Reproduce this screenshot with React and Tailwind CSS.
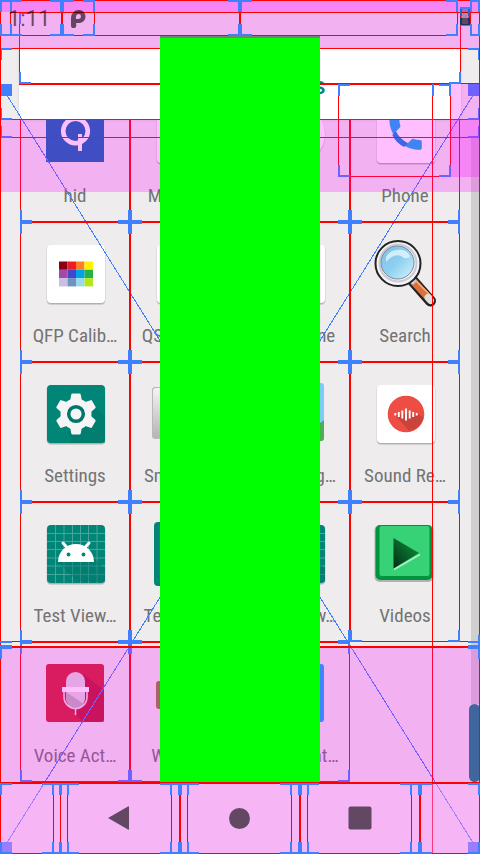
import React from "react";

const FONT = "font-['Roboto_Condensed','Liberation_Sans_Narrow',Roboto,sans-serif]";

const RED = "#ff0000";
const BLUE = "#4080ff";

function Plate({ fill = "#ffffff", children }) {
  return (
    <>
      <rect x="-0.5" y="0.5" width="59" height="59.5" rx="4.5" fill="#00000020" />
      <rect x="0" y="1" width="58" height="58" rx="4" fill="#00000025" />
      <rect x="0" y="0" width="58" height="58" rx="4" fill={fill} />
      {children}
    </>
  );
}

const icons = {
  hid: (
    <>
      <rect x="-1" y="-1" width="58" height="58" fill="#0068b0" />
      <circle cx="28.5" cy="26" r="12.3" fill="none" stroke="#fff" strokeWidth="4.6" />
      <path d="M33 29V46" stroke="#fff" strokeWidth="4" />
    </>
  ),
  card: <Plate />,
  round: (
    <>
      <circle cx="29" cy="30" r="29.5" fill="#00000025" />
      <circle cx="29" cy="29" r="29" fill="#fff" />
    </>
  ),
  phone: (
    <Plate>
      <g transform="translate(7 7) scale(1.8)">
        <path
          fill="#00b0f0"
          d="M6.62 10.79c1.44 2.83 3.76 5.14 6.59 6.59l2.2-2.2c.27-.27.67-.36 1.02-.24 1.12.37 2.33.57 3.57.57.55 0 1 .45 1 1V20c0 .55-.45 1-1 1C10.61 21 3 13.39 3 4c0-.55.45-1 1-1h3.5c.55 0 1 .45 1 1 0 1.25.2 2.45.57 3.57.11.35.03.74-.25 1.02z"
        />
        <path fill="#0088d8" d="M6.62 10.79c1.44 2.83 3.76 5.14 6.59 6.59l-2.1 2.1C8.3 18 6 15.8 4.6 12.8z" />
      </g>
    </Plate>
  ),
  qfp: (
    <Plate>
      {[
        ["#880015", "#ed1c24", "#ff7f27", "#fff200"],
        ["#a349a4", "#3f48cc", "#00a2e8", "#22b14c"],
        ["#c8bfe7", "#7092be", "#99d9ea", "#b5e61d"],
      ].map((row, r) =>
        row.map((c, i) => (
          <rect key={c} x={12 + i * 8.5} y={16.5 + r * 8.3} width="8.5" height="8.3" fill={c} />
        ))
      )}
    </Plate>
  ),
  search: (
    <>
      <path d="M35 35L53.5 56" stroke="#222" strokeWidth="11" strokeLinecap="round" />
      <path d="M36 36L53 54.500" stroke="#d9703d" strokeWidth="7.5" />
      <path d="M39 36L55 52" stroke="#f5b18a" strokeWidth="1.5" />
      <path d="M51 52.500L53.500 55.500" stroke="#ddd" strokeWidth="7" strokeLinecap="round" />
      <path d="M34 34L38 38" stroke="#ccc" strokeWidth="6" />
      <circle cx="21" cy="18.500" r="22.500" fill="#f4f4f8" stroke="#222" strokeWidth="2" />
      <circle cx="21" cy="18" r="18.500" fill="none" stroke="#c9cad6" strokeWidth="2" />
      <circle cx="20.500" cy="17.500" r="16.500" fill="url(#glass)" stroke="#7d8790" strokeWidth="1" />
      <path d="M9 12Q14 3 26 5Q32 7 33 12Q28 15 24 11Q17 8 9 17Z" fill="#f1fcff" opacity="0.7" />
    </>
  ),
  settings: (
    <Plate fill="#018577">
      <path d="M45 19L58 32V58H24L20 46L40 40Z" fill="#017a6d" opacity="0.6" />
      <g fill="#f5f5f5">
        <circle cx="29" cy="29" r="15.5" />
        {[0, 60, 120, 180, 240, 300].map((a) => (
          <path
            key={a}
            transform={`rotate(${a} 29 29)`}
            d="M25.5 8.500h7q1 0 1.200 1l1.300 7h-12l1.300-7q.2-1 1.200-1Z"
          />
        ))}
      </g>
      <circle cx="29" cy="29" r="7.3" fill="#f5f5f5" stroke="#00776b" strokeWidth="3.5" />
    </Plate>
  ),
  battery: (
    <>
      <rect x="-5" y="2" width="68" height="52" rx="3" fill="#b9b9b9" />
      <rect x="-4" y="3" width="66" height="49" rx="3" fill="url(#steel)" />
    </>
  ),
  landscape: (
    <>
      <rect x="-1" y="-2" width="58" height="58" rx="3" fill="#7ecbf5" />
      <path d="M30 56L57 35V53Q57 56 54 56Z" fill="#4caf50" />
    </>
  ),
  sound: (
    <Plate>
      <circle cx="29" cy="29" r="18.3" fill="#ee4d43" />
      <path d="M18 30L32 46Q43 44 46.500 33L40 28Z" fill="#a83c35" opacity="0.5" />
      <path
        d="M18.300 28v2.500M21.800 27v5M25.300 25.500v8M29 23.500v12M32.700 25.500v8M36.200 27v5M39.700 28v2.500"
        stroke="#fff"
        strokeWidth="1.9"
      />
    </Plate>
  ),
  android: (
    <Plate fill="#018577">
      <path
        d="M8.500 0V58M17 0V58M25.500 0V58M33.500 0V58M41.500 0V58M50 0V58M0 8.500H58M0 16.500H58M0 24.500H58M0 33H58M0 41H58M0 49.500H58"
        stroke="#4fa99f"
        strokeWidth="0.9"
      />
      <path d="M11 37L31 57H58V44L46 32Z" fill="#01766a" opacity="0.45" />
      <path d="M16 18L20.500 23M42 18L37.500 23" stroke="#fff" strokeWidth="3" strokeLinecap="round" />
      <path d="M11 37a18 18 0 0 1 36 0Z" fill="#fff" />
      <circle cx="21.500" cy="29.500" r="1.9" fill="#018577" />
      <circle cx="36.500" cy="29.500" r="1.9" fill="#018577" />
    </Plate>
  ),
  tall: <rect x="-3" y="-3" width="64" height="64" rx="4" fill="#018577" />,
  videos: (
    <>
      <rect x="-2.500" y="0" width="59" height="57" rx="5" fill="#00000040" />
      <rect x="-1.500" y="0" width="57" height="55" rx="5" fill="#00953c" />
      <rect x="2.500" y="1" width="50" height="50" rx="2" fill="#36d275" />
      <path d="M17 44.500L43 29.500" stroke="#a9f0c8" strokeWidth="1.8" />
      <path d="M16.500 13V43.500L42 28Z" fill="url(#play)" />
    </>
  ),
  voice: (
    <>
      <rect x="-1" y="-1" width="58" height="58" rx="3" fill="#cb262a" />
      <path d="M36 9L57 25V57H36L20 40L36 36Z" fill="#a81027" opacity="0.55" />
      <rect x="19" y="7" width="19" height="36" rx="9.5" fill="#dedede" />
      <path d="M19 27L37 39Q34 44 28 43Q20 41 19 33Z" fill="#b9b9b9" />
      <rect x="15" y="22" width="27" height="5" fill="#fff" />
      <path d="M17 27v5a11.500 11.500 0 0 0 23 0V27M28.500 43V50" fill="none" stroke="#f5dfe4" strokeWidth="1.6" />
    </>
  ),
  wallet: <rect x="-1" y="16" width="60" height="28" rx="3" fill="#8b8536" />,
  blue: <rect x="-1" y="-1" width="58" height="58" rx="3" fill="#00b0ff" />,
};

const apps = [
  ["hid", "hid"],
  ["card", "Messagi…"],
  ["round", "Music"],
  ["phone", "Phone"],
  ["qfp", "QFP Calib…"],
  ["card", "QSensor T…"],
  ["card", "QTI Engine"],
  ["search", "Search"],
  ["settings", "Settings"],
  ["battery", "Snapdrag…"],
  ["landscape", "Snapdrag…"],
  ["sound", "Sound Re…"],
  ["android", "Test View…"],
  ["tall", "Test View…"],
  ["android", "Test View…"],
  ["videos", "Videos"],
  ["voice", "Voice Act…"],
  ["wallet", "WebVie…"],
  ["blue", "Widget Int…"],
];

function AppTile({ icon, label }) {
  return (
    <button type="button" className="flex h-[140px] flex-col items-center pt-[23px]">
      <svg viewBox="0 0 58 58" className="ml-[2px] h-[58px] w-[58px] shrink-0 overflow-visible" aria-hidden="true">
        {icons[icon]}
      </svg>
      <span className="mt-5 text-[19px] leading-[26px] whitespace-nowrap text-[#737373]">{label}</span>
    </button>
  );
}

// Bounds of each view as [left, top, right, bottom].
const barFrames = [
  [0, 0, 240, 36], [10, 0, 62, 36], [62, 0, 95, 36], [240, 0, 458, 36],
  [460, 7, 470, 26], [470, 0, 480, 36],
  [0, 783, 54, 854], [67, 783, 172, 854], [187, 783, 292, 854], [307, 783, 412, 854],
  [0, 783, 61, 854], [60, 783, 180, 854], [180, 783, 300, 854], [300, 783, 420, 854],
  [420, 783, 480, 854],
];
const viewFrames = [[0, 48, 480, 120], [338, 84, 451, 177]];
for (let r = 1; r < 5; r++) {
  for (let c = 0; c < (r === 4 ? 3 : 4); c++) {
    viewFrames.push([20 + c * 110, 82 + r * 140, 130 + c * 110, 222 + r * 140]);
  }
}

// Single rules as [x, y, width, height].
const barRules = [
  [0, 0, 480, 1], [0, 0, 1, 854], [479, 0, 1, 854], [0, 853, 480, 1],
  [10, 12, 470, 1], [0, 782, 480, 1], [0, 646, 480, 2],
];
const viewRules = [
  [19, 12, 1, 72], [460, 12, 1, 72], [19, 83, 461, 1], [19, 84, 432, 1],
  [0, 137, 480, 1], [432, 84, 1, 770], [459, 119, 1, 103],
  [20, 119, 1, 103], [129, 119, 2, 103], [349, 119, 2, 103], [20, 221, 440, 1],
  [0, 641, 480, 1],
];
const marks = [
  [19, 12, 12, 2], [19, 12, 2, 12], [19, 72, 2, 12], [19, 82, 12, 2],
  [459, 72, 2, 12], [449, 82, 12, 2], [0, 84, 12, 12], [468, 84, 12, 12],
  [0, 126, 2, 12], [0, 136, 12, 2], [478, 126, 2, 12], [468, 136, 12, 2],
  [432, 84, 2, 12], [20, 210, 2, 12], [20, 220, 12, 2], [128, 210, 4, 12], [118, 220, 24, 2],
  [348, 210, 4, 12], [338, 220, 24, 2], [458, 210, 2, 12], [448, 220, 12, 2],
  [0, 842, 12, 12], [468, 842, 12, 12],
];
const barMarks = [
  [0, 641, 12, 2], [0, 645, 12, 4], [0, 645, 2, 14],
  [468, 641, 12, 2], [468, 645, 12, 4], [478, 635, 2, 24],
];

function corners([l, t, r, b]) {
  const n = Math.min(12, Math.floor((r - l) / 2));
  const m = Math.min(12, Math.floor((b - t) / 2));
  return (
    `M${l} ${t}h${n}v2h-${n - 2}v${m - 2}h-2zM${r} ${t}v${m}h-2v-${m - 2}h-${n - 2}v-2z` +
    `M${l} ${b}v-${m}h2v${m - 2}h${n - 2}v2zM${r} ${b}h-${n}v-2h${n - 2}v-${m - 2}h2z`
  );
}

function Bounds({ frames, rules, marks: squares }) {
  return (
    <>
      <g fill={RED}>
        {rules.map(([x, y, w, h], i) => (
          <rect key={i} x={x} y={y} width={w} height={h} />
        ))}
      </g>
      <g fill="none" stroke={RED}>
        {frames.map(([l, t, r, b], i) => (
          <rect key={i} x={l + 0.5} y={t + 0.5} width={r - l - 1} height={b - t - 1} />
        ))}
      </g>
      <g fill={BLUE}>
        {frames.map((f, i) => (
          <path key={i} d={corners(f)} />
        ))}
        {squares.map(([x, y, w, h], i) => (
          <rect key={i} x={x} y={y} width={w} height={h} />
        ))}
      </g>
    </>
  );
}

function BoundsOverlay() {
  return (
    <svg
      viewBox="0 0 480 854"
      preserveAspectRatio="none"
      shapeRendering="crispEdges"
      className="pointer-events-none absolute inset-0 z-10 h-full w-full"
      aria-hidden="true"
    >
      <path d="M0 84L480 854M480 84L0 854" stroke={BLUE} strokeWidth="1" />
      <Bounds frames={viewFrames} rules={viewRules} marks={marks} />
      <rect x="0" y="783" width="480" height="71" fill="#ffffff" fillOpacity="0.3" />
      <g fill="#ff00ff" fillOpacity="0.25">
        <rect x="0" y="0" width="480" height="48" />
        <rect x="0" y="0" width="480" height="12" />
        <rect x="0" y="119" width="480" height="73" />
        <rect x="451" y="84" width="29" height="93" />
        <rect x="0" y="647" width="480" height="207" />
      </g>
      <Bounds frames={barFrames} rules={barRules} marks={barMarks} />
    </svg>
  );
}

export default function App() {
  return (
    <div className={`relative flex min-h-screen flex-col bg-[#eeeced] ${FONT}`}>
      <svg width="0" height="0" className="absolute" aria-hidden="true">
        <defs>
          <linearGradient id="glass" x1="0" y1="0" x2="1" y2="1">
            <stop offset="0" stopColor="#79bfe6" />
            <stop offset="0.5" stopColor="#8ed0f0" />
            <stop offset="1" stopColor="#d6f4ff" />
          </linearGradient>
          <linearGradient id="steel" x1="0" y1="0" x2="0" y2="1">
            <stop offset="0" stopColor="#f4f4f4" />
            <stop offset="1" stopColor="#b5b5b5" />
          </linearGradient>
          <linearGradient id="play" x1="1" y1="0" x2="0" y2="1">
            <stop offset="0" stopColor="#0b9a40" />
            <stop offset="1" stopColor="#062c14" />
          </linearGradient>
        </defs>
      </svg>

      <header className="flex h-12 items-start justify-between pr-[10px] pl-2">
        <div className="relative z-20 flex h-[38px] items-center gap-5 text-black/60">
          <time className="font-[Roboto,sans-serif] text-[22px] leading-6">1:11</time>
          <svg viewBox="0 0 16 20" className="h-5 w-4" aria-hidden="true">
            <path
              fill="currentColor"
              fillRule="evenodd"
              d="M1 9A7.500 8 0 0 1 8.500 1C12.500 1 15.500 3.700 15.500 7.500S12.500 14 8.700 14H6.200V16.500A2.600 2.600 0 0 1 1 16.500ZM6 10H8.600A2.500 2.500 0 1 0 6 7.500Z"
            />
          </svg>
        </div>
        <svg viewBox="0 0 10 18" className="relative z-20 mt-2 h-[18px] w-[10px]" aria-hidden="true">
          <path d="M0 1h10v9H0z" fill="#000" opacity="0.25" />
          <path d="M0 10h10v7H0z" fill="#000" opacity="0.6" />
        </svg>
      </header>

      <label className="mx-[19px] flex h-[71px] items-center justify-center rounded-b bg-white pt-1 shadow-sm">
        <span className="ml-1 flex w-[167px] items-center gap-2 text-[#00897b]">
          <svg viewBox="0 0 24 24" className="h-6 w-6 shrink-0" fill="none" stroke="currentColor" strokeWidth="2" aria-hidden="true">
            <circle cx="9" cy="9" r="7" />
            <path d="M14 14L21 21" />
          </svg>
          <input
            type="text"
            aria-label="Search apps"
            placeholder="Search apps"
            className="min-w-0 flex-1 bg-transparent text-right font-[Roboto,sans-serif] text-2xl font-medium placeholder:text-[#00897b] focus:outline-none"
          />
        </span>
      </label>

      <main className="flex flex-1 overflow-hidden">
        <div className="-mt-[37px] grid flex-1 grid-cols-4 content-start pl-5">
          {apps.map(([icon, label], i) => (
            <AppTile key={i} icon={icon} label={label} />
          ))}
        </div>
        <div className="mt-[19px] ml-[9px] flex w-[11px] flex-col items-end">
          <div className="w-[9px] flex-1 bg-[#d0cfd0]" />
          <div className="h-[78px] w-[11px] rounded-full bg-[#008880]" />
        </div>
      </main>

      <nav className="flex h-[72px] justify-center">
        <div className="relative z-20 grid w-3/4 grid-cols-3 text-black/60">
          <button type="button" aria-label="Back" className="flex items-center justify-center">
            <svg viewBox="0 0 24 24" className="h-6 w-6" fill="currentColor" aria-hidden="true">
              <path d="M0 12L20 0.500Q21 0 21 1V23Q21 24 20 23.500Z" />
            </svg>
          </button>
          <button type="button" aria-label="Home" className="flex items-center justify-center">
            <svg viewBox="0 0 24 24" className="h-6 w-6" fill="currentColor" aria-hidden="true">
              <circle cx="11.500" cy="12.500" r="10.5" />
            </svg>
          </button>
          <button type="button" aria-label="Recent apps" className="flex items-center justify-center">
            <svg viewBox="0 0 24 24" className="h-6 w-6" fill="currentColor" aria-hidden="true">
              <rect x="0.500" y="0.500" width="23" height="23" rx="2" />
            </svg>
          </button>
        </div>
      </nav>

      <BoundsOverlay />
      <div className="absolute top-9 bottom-[72px] left-1/3 z-30 w-1/3 border-t-2 border-[#75807a] bg-[#00ff00]" />
    </div>
  );
}
